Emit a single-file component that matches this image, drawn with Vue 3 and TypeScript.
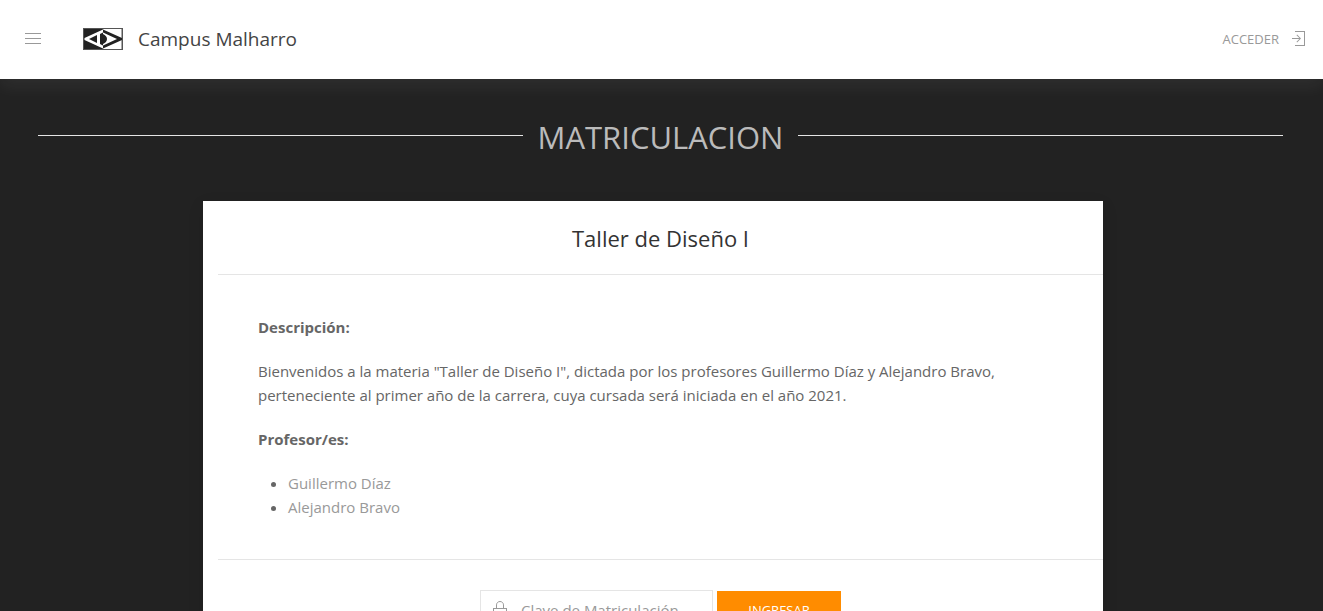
<script setup lang="ts">
import { ref } from 'vue'

const siteName = 'Campus Malharro'
const course = 'Taller de Diseño I'
const teachers: string[] = ['Guillermo Díaz', 'Alejandro Bravo']
const enrolmentKey = ref('')
</script>

<template>
  <div class="page">
    <header class="navbar">
      <button class="menu" type="button" aria-label="Menú">
        <svg width="20" height="20" viewBox="0 0 20 20" fill="currentColor">
          <rect x="2" y="4" width="16" height="1" />
          <rect x="2" y="9" width="16" height="1" />
          <rect x="2" y="14" width="16" height="1" />
        </svg>
      </button>
      <a class="brand" href="#">
        <svg class="logo" width="40" height="22" viewBox="0 0 40 22" aria-hidden="true">
          <rect width="40" height="22" fill="#555" />
          <rect x="1" y="1" width="19" height="20" fill="#222" />
          <rect x="20" y="1" width="18.500" height="20" fill="#fff" />
          <path d="M20 1.500 1.500 10V12L20 20.500V17.500L17 16V6L20 4.500Z" fill="#fff" />
          <path d="M14 7 6 11 14 15Z" fill="#222" />
          <path d="M20 1.500 39 10V12L20 20.500V17.500L34 11 20 4.500Z" fill="#222" />
          <path d="M17 7.500 20 6C22.500 7 24 9 24 11S22.500 15 20 16L17 14.500Z" fill="#222" />
        </svg>
        <span>{{ siteName }}</span>
      </a>
      <a class="login" href="#">
        <span>ACCEDER</span>
        <svg width="20" height="20" viewBox="0 0 20 20" fill="currentColor" aria-hidden="true">
          <polygon points="7 2 17 2 17 17 7 17 7 16 16 16 16 3 7 3 7 2" />
          <polygon points="9.1 13.4 8.5 12.8 11.28 10 4 10 4 9 11.28 9 8.5 6.2 9.1 5.62 13 9.5 9.1 13.4" />
        </svg>
      </a>
    </header>

    <main class="section">
      <h1 class="heading">MATRICULACION</h1>
      <div class="grid">
        <article class="card">
          <h2 class="course">{{ course }}</h2>
          <div class="details">
            <p><strong>Descripción:</strong></p>
            <p>
              Bienvenidos a la materia "{{ course }}", dictada por los profesores Guillermo Díaz y Alejandro Bravo,
              perteneciente al primer año de la carrera, cuya cursada será iniciada en el año 2021.
            </p>
            <p><strong>Profesor/es:</strong></p>
            <ul>
              <li v-for="teacher in teachers" :key="teacher"><a href="#">{{ teacher }}</a></li>
            </ul>
          </div>
          <form class="enrol" @submit.prevent>
            <label class="field">
              <svg width="20" height="20" viewBox="0 0 20 20" fill="none" stroke="currentColor" aria-hidden="true">
                <rect x="3.5" y="8.5" width="13" height="10" />
                <path d="M6.5,8 L6.5,4.88 C6.5,3.01 8.07,1.5 10,1.5 C11.93,1.5 13.5,3.01 13.5,4.88 L13.5,8" />
              </svg>
              <input v-model="enrolmentKey" type="password" placeholder="Clave de Matriculación" aria-label="Clave de Matriculación" />
            </label>
            <button class="submit" type="submit">INGRESAR</button>
          </form>
        </article>
      </div>
    </main>
  </div>
</template>

<style>
body {
  margin: 0;
  background: #222;
}
</style>

<style scoped>
.page {
  height: 100vh;
  overflow: hidden;
  background: #222;
  color: #666;
  font-family: "Segoe UI", "Open Sans", "Noto Sans", sans-serif;
  font-size: 15px;
  line-height: 24px;
}
a {
  color: #999;
  text-decoration: none;
}
svg {
  display: block;
  flex: none;
}
.navbar {
  display: flex;
  align-items: center;
  box-sizing: border-box;
  height: 79px;
  padding: 0 15px 2px 23px;
  background: #fff;
  box-shadow: 0 8px 16px rgba(255, 255, 255, 0.06);
}
.menu {
  padding: 0;
  border: 0;
  background: none;
  color: #999;
  cursor: pointer;
}
.brand {
  display: flex;
  align-items: center;
  gap: 15px;
  margin-left: 40px;
  color: #444;
  font-size: 19px;
}
.login {
  display: flex;
  align-items: center;
  gap: 9px;
  margin-left: auto;
  font-size: 13px;
}
.section {
  padding: 37px 40px 40px 38px;
}
.heading {
  display: flex;
  align-items: center;
  gap: 15px;
  margin: 0 0 43px;
  color: #bbb;
  font-size: 31px;
  font-weight: 400;
  line-height: 42px;
}
.heading::before,
.heading::after {
  content: "";
  flex: 1;
  margin-bottom: 4px;
  border-top: 1px solid #e5e5e5;
}
.grid {
  margin-left: -15px;
}
.card {
  box-sizing: border-box;
  max-width: 900px;
  margin: 0 auto;
  padding-left: 15px;
  background: #fff;
  box-shadow: 0 5px 15px rgba(0, 0, 0, 0.1);
}
.course {
  margin: 0;
  padding: 20px 0 19px;
  color: #333;
  font-size: 22px;
  font-weight: 400;
  line-height: 34px;
  text-align: center;
}
.details {
  padding: 40px;
  border: solid #e5e5e5;
  border-width: 1px 0;
}
.details p {
  margin: 0 0 20px;
}
.details ul {
  margin: 0;
  padding-left: 30px;
}
.enrol {
  display: flex;
  justify-content: center;
  align-items: center;
  gap: 4px;
  padding: 30px 0;
}
.field {
  display: flex;
  align-items: center;
  box-sizing: border-box;
  width: 233px;
  height: 40px;
  padding-left: 9px;
  gap: 11px;
  border: 1px solid #e5e5e5;
  color: #999;
}
.field input {
  flex: 1;
  min-width: 0;
  padding: 0;
  border: 0;
  outline: 0;
  background: none;
  color: #666;
  font: inherit;
}
.field input::placeholder {
  color: #999;
}
.submit {
  width: 124px;
  height: 38px;
  padding: 0;
  border: 0;
  background: #ff8c00;
  color: #fff;
  font: inherit;
  font-size: 13px;
  cursor: pointer;
}
</style>
